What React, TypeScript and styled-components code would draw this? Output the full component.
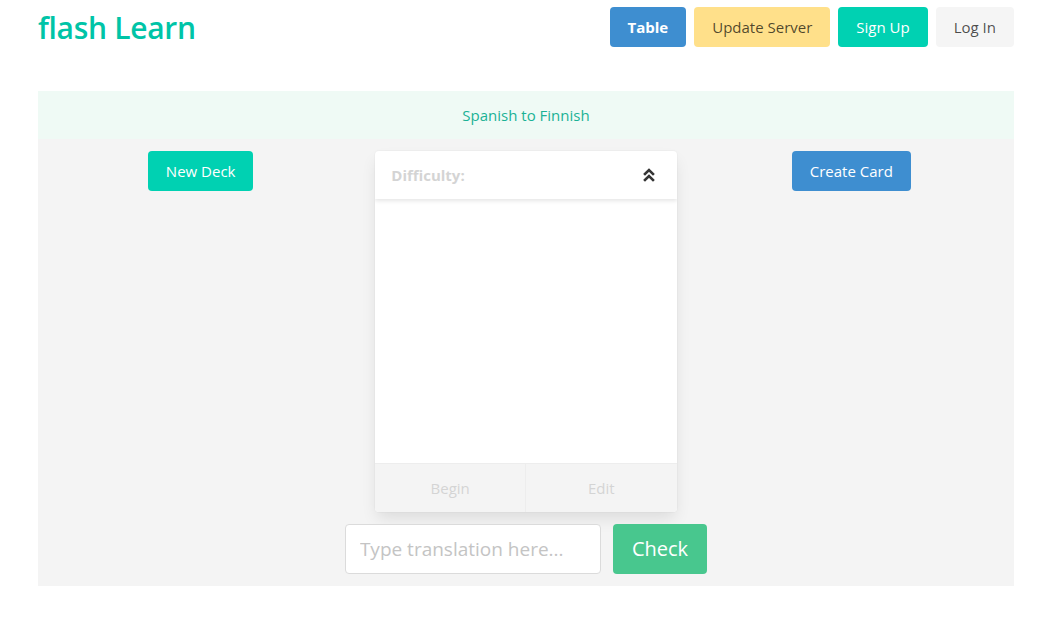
import React from "react";
import styled, { createGlobalStyle } from "styled-components";

const Global = createGlobalStyle`
  html, body { margin: 0; padding: 0; background: #fff; }
  body { font-family: "Open Sans", "Noto Sans", sans-serif; color: #4a4a4a; font-size: 16px; }
  * { box-sizing: border-box; }
`;

const Page = styled.div`
  width: 976px;
  margin-left: 38px;
`;

const Header = styled.header`
  display: flex;
  align-items: center;
  justify-content: space-between;
  height: 54px;
  margin-bottom: 37px;
`;

const Title = styled.h1`
  margin: 2px 0 0;
  font-size: 30px;
  font-weight: 600;
  color: #00c4a7;
  line-height: 1.125;
  letter-spacing: -0.3px;
`;

const Buttons = styled.div`
  display: flex;
  gap: 8px;
`;

const palette: Record<string, { bg: string; fg: string }> = {
  info: { bg: "#3e8ed0", fg: "#fff" },
  warning: { bg: "#ffe08a", fg: "rgba(0,0,0,0.7)" },
  primary: { bg: "#00d1b2", fg: "#fff" },
  light: { bg: "#f5f5f5", fg: "rgba(0,0,0,0.7)" },
  success: { bg: "#48c78e", fg: "#fff" },
};

const Button = styled.button<{ $kind: string; $bold?: boolean; $medium?: boolean }>`
  font-family: inherit;
  border: 1px solid transparent;
  border-radius: 4px;
  background: ${(p) => palette[p.$kind].bg};
  color: ${(p) => palette[p.$kind].fg};
  font-weight: ${(p) => (p.$bold ? 700 : 400)};
  font-size: ${(p) => (p.$medium ? "20px" : "15px")};
  height: ${(p) => (p.$medium ? "50px" : "40px")};
  padding: 0 ${(p) => (p.$medium ? "18px" : "17px")};
  line-height: 1.5;
  cursor: pointer;
  white-space: nowrap;
`;

const Banner = styled.div`
  background: #effaf5;
  color: #1bb295;
  text-align: center;
  height: 48px;
  line-height: 48px;
  font-size: 15px;
`;

const Section = styled.div`
  background: #f4f4f4;
  padding: 0 0 12px;
`;

const Columns = styled.div`
  display: grid;
  grid-template-columns: 1fr 1fr 1fr;
`;

const Column = styled.div`
  padding: 12px;
  display: flex;
  justify-content: center;
  align-items: flex-start;
`;

const Card = styled.div`
  width: 100%;
  background: #fff;
  border-radius: 4px;
  box-shadow: 0 8px 16px -2px rgba(10, 10, 10, 0.1), 0 0 0 1px rgba(10, 10, 10, 0.02);
  overflow: hidden;
`;

const CardHeader = styled.div`
  display: flex;
  align-items: center;
  justify-content: space-between;
  height: 48px;
  padding: 0 16px;
  box-shadow: 0 2px 4px rgba(10, 10, 10, 0.1);
  position: relative;
`;

const HeaderTitle = styled.span`
  font-weight: 700;
  font-size: 15px;
  color: #d4d4d4;
`;

const IconWrap = styled.span`
  display: flex;
  width: 24px;
  justify-content: center;
  margin-right: 0;
  color: #363636;
`;

const CardContent = styled.div`
  height: 264px;
`;

const CardFooter = styled.div`
  display: grid;
  grid-template-columns: 1fr 1fr;
  border-top: 1px solid #ededed;
  background: #f4f4f4;
`;

const FooterItem = styled.div<{ $first?: boolean }>`
  height: 48px;
  display: flex;
  align-items: center;
  justify-content: center;
  color: #d4d4d4;
  font-size: 15px;
  border-right: ${(p) => (p.$first ? "1px solid #ededed" : "none")};
`;

const InputRow = styled.div`
  display: flex;
  justify-content: center;
  gap: 12px;
`;

const Input = styled.input`
  width: 256px;
  height: 50px;
  border: 1px solid #dbdbdb;
  border-radius: 4px;
  padding: 0 14px;
  font-family: inherit;
  font-size: 19px;
  color: #363636;
  background: #fff;
  outline: none;
  &::placeholder { color: #c4c4c4; }
`;

const DoubleUp = () => (
  <svg width="12" height="14" viewBox="0 0 12 14" fill="none" stroke="currentColor" strokeWidth="2.6" strokeLinecap="square">
    <polyline points="2,6 6,2 10,6" />
    <polyline points="2,12 6,8 10,12" />
  </svg>
);

export default function App() {
  return (
    <>
      <Global />
      <Page>
        <Header>
          <Title>flash Learn</Title>
          <Buttons>
            <Button $kind="info" $bold>Table</Button>
            <Button $kind="warning">Update Server</Button>
            <Button $kind="primary">Sign Up</Button>
            <Button $kind="light">Log In</Button>
          </Buttons>
        </Header>
        <Banner>Spanish to Finnish</Banner>
        <Section>
          <Columns>
            <Column>
              <Button $kind="primary">New Deck</Button>
            </Column>
            <Column>
              <Card>
                <CardHeader>
                  <HeaderTitle>Difficulty:</HeaderTitle>
                  <IconWrap>
                    <DoubleUp />
                  </IconWrap>
                </CardHeader>
                <CardContent />
                <CardFooter>
                  <FooterItem $first>Begin</FooterItem>
                  <FooterItem>Edit</FooterItem>
                </CardFooter>
              </Card>
            </Column>
            <Column>
              <Button $kind="info">Create Card</Button>
            </Column>
          </Columns>
          <InputRow>
            <Input placeholder="Type translation here..." />
            <Button $kind="success" $medium>Check</Button>
          </InputRow>
        </Section>
      </Page>
    </>
  );
}
